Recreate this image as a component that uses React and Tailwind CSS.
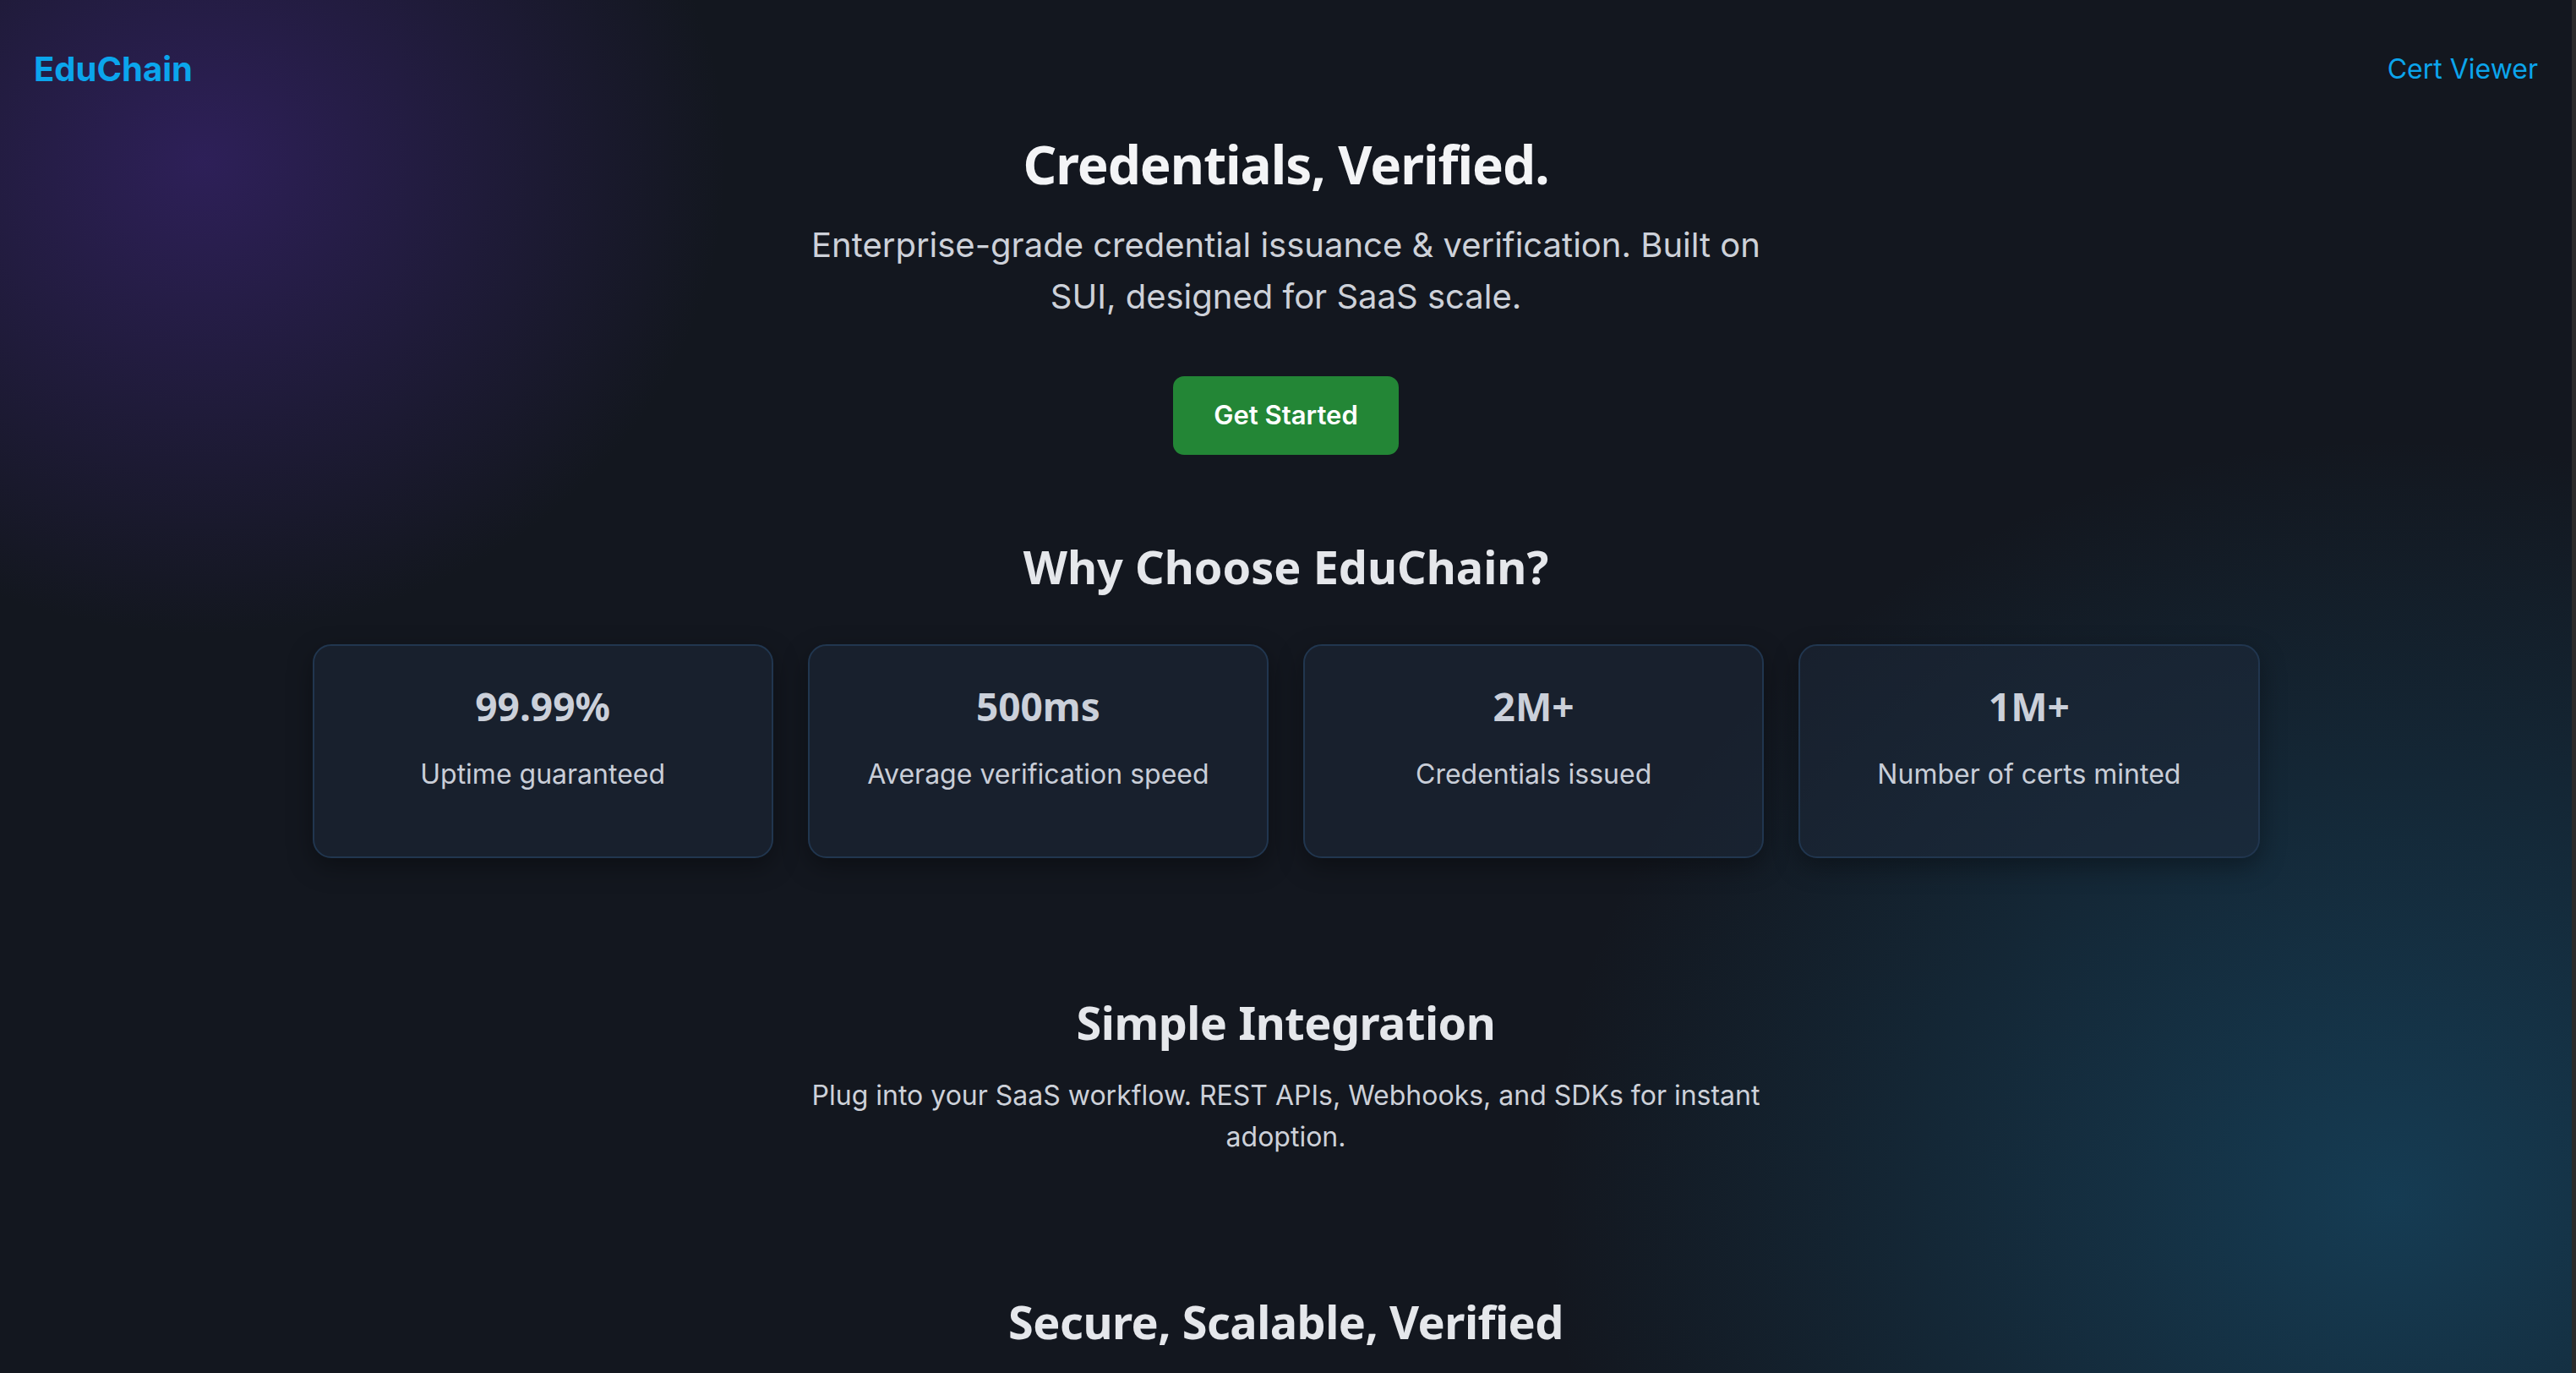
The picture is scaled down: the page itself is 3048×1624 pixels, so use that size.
const stats = [
  { value: "99.99%", label: "Uptime guaranteed" },
  { value: "500ms", label: "Average verification speed" },
  { value: "2M+", label: "Credentials issued" },
  { value: "1M+", label: "Number of certs minted" },
];

function StatCard({ value, label }) {
  return (
    <div className="rounded-[22px] border-2 border-[#21364f] bg-[#1e293b]/50 pt-[40px] pb-[70px] text-center shadow-[0_10px_30px_rgba(0,0,0,0.35)]">
      <p className="font-['Noto_Sans',sans-serif] font-bold text-[46px] leading-[63px] text-[#cbd0da]">{value}</p>
      <p className="mt-[22px] font-['Inter',sans-serif] text-[32px] leading-[54px] text-[#c9ced8]">{label}</p>
    </div>
  );
}

export default function App() {
  return (
    <div className="h-screen flex overflow-hidden bg-[#13171f]">
      <div className="flex-1 flex flex-col bg-[radial-gradient(620px_560px_at_240px_190px,rgba(72,40,145,0.5),transparent),radial-gradient(1000px_900px_at_2830px_1420px,rgba(24,104,146,0.45),transparent)]">

        {/* Navbar */}
        <nav className="flex items-center justify-between px-[40px] pt-[50px] font-['Inter',sans-serif]">
          <span className="text-[40px] leading-[63px] font-bold text-[#0ba5ec]">EduChain</span>
          <a className="text-[32px] leading-[63px] text-[#0ba5ec]">Cert Viewer</a>
        </nav>

        {/* Hero */}
        <section className="flex flex-col items-center text-center mt-[41px]">
          <h1 className="font-['Noto_Sans',sans-serif] font-bold text-[62px] leading-[81px] tracking-[-1px] text-[#f3f4f6]">
            Credentials, Verified.
          </h1>
          <p className="mt-[24px] max-w-[1152px] font-['Inter',sans-serif] text-[40px] leading-[61px] text-[#cdd1d9]">
            Enterprise-grade credential issuance &amp; verification. Built on SUI, designed for SaaS scale.
          </p>
          <button className="mt-[64px] h-[93px] w-[267px] rounded-[13px] bg-[#238636] font-['Inter',sans-serif] text-[31px] font-semibold text-white">
            Get Started
          </button>
        </section>

        {/* Why choose */}
        <section className="flex flex-col items-center mt-[96px]">
          <h2 className="font-['Noto_Sans',sans-serif] font-bold text-[54px] leading-[72px] text-[#e5e7eb]">
            Why Choose EduChain?
          </h2>
          <div className="mt-[56px] grid w-[2304px] grid-cols-4 gap-[41px]">
            {stats.map((s) => (
              <StatCard key={s.value} value={s.value} label={s.label} />
            ))}
          </div>
        </section>

        {/* Integration */}
        <section className="flex flex-col items-center text-center mt-[158px]">
          <h2 className="font-['Noto_Sans',sans-serif] font-bold text-[54px] leading-[72px] tracking-[-0.5px] text-[#e5e7eb]">
            Simple Integration
          </h2>
          <p className="mt-[26px] max-w-[1152px] font-['Inter',sans-serif] text-[32px] leading-[49px] text-[#cdd1d9]">
            Plug into your SaaS workflow. REST APIs, Webhooks, and SDKs for instant adoption.
          </p>
        </section>

        <section className="flex flex-col items-center mt-[158px]">
          <h2 className="font-['Noto_Sans',sans-serif] font-bold text-[54px] leading-[72px] tracking-[-0.5px] text-[#e5e7eb]">
            Secure, Scalable, Verified
          </h2>
        </section>
      </div>

      {/* scrollbar track */}
      <div className="w-[5px] bg-[#2b2b2b]" />
    </div>
  );
}
